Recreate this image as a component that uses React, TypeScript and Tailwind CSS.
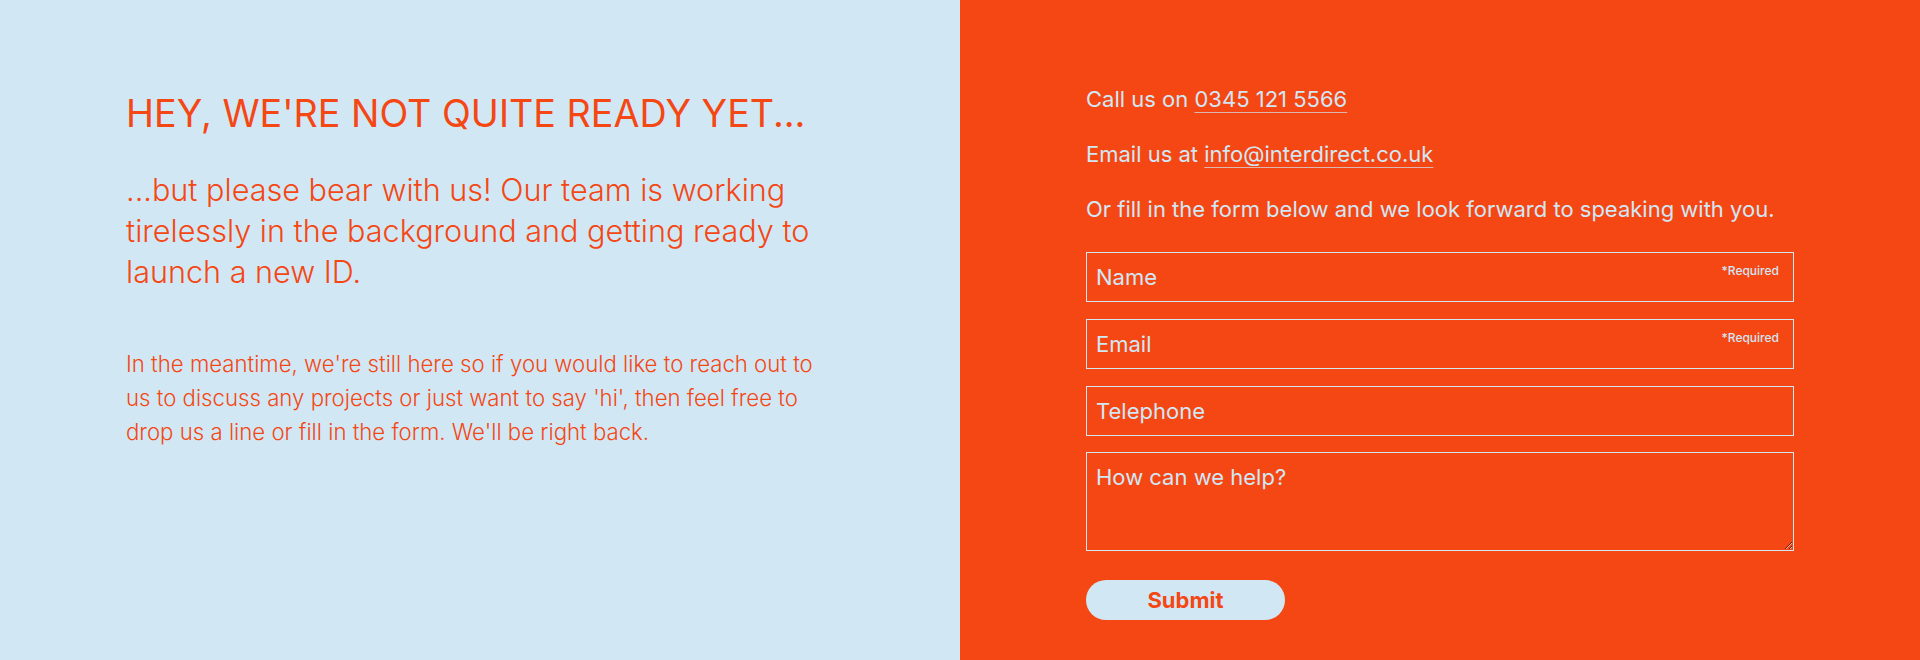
import { useState, ChangeEvent, FormEvent } from "react";

const inputClass =
  "w-full h-[50px] border border-[#d1e7f4] bg-transparent px-[9px] text-[22px] text-[#d1e7f4] placeholder:text-[#d1e7f4] outline-none";

const App = () => {
  const [form, setForm] = useState({
    name: "",
    email: "",
    telephone: "",
    message: "",
  });

  function handleChange(e: ChangeEvent<HTMLInputElement | HTMLTextAreaElement>) {
    const { name, value } = e.target;
    setForm({ ...form, [name]: value });
  }

  const submitForm = (e: FormEvent) => {
    e.preventDefault();
    console.log(form);
  };

  return (
    <div className="grid grid-cols-2 h-[660px] font-['Inter',sans-serif]">
      <div className="bg-[#d1e7f4] pl-[126px] pt-[91px] text-[#f44714]">
        <h1 className="text-[37.7px] leading-[1.2] font-normal">
          HEY, WE'RE NOT QUITE READY YET...
        </h1>
        <p className="mt-[33px] w-[700px] text-[30.6px] leading-[41px] font-light">
          ...but please bear with us! Our team is working tirelessly in the
          background and getting ready to launch a new ID.
        </p>
        <p className="mt-[55px] w-[700px] text-[22.2px] leading-[34px] font-light">
          In the meantime, we're still here so if you would like to reach out
          to us to discuss any projects or just want to say 'hi', then feel free
          to drop us a line or fill in the form. We'll be right back.
        </p>
      </div>

      <div className="bg-[#f44714] pl-[126px] pt-[84px] text-[#d1e7f4]">
        <div className="w-[708px]">
          <p className="text-[22px] leading-[30px]">
            Call us on{" "}
            <a
              href="tel:03451215566"
              className="underline decoration-[#d1e7f4]/70 decoration-1 underline-offset-[5px]"
            >
              0345 121 5566
            </a>
          </p>
          <p className="mt-[25px] text-[22px] leading-[30px]">
            Email us at{" "}
            <a
              href="mailto:info@interdirect.co.uk"
              className="underline decoration-[#d1e7f4]/70 decoration-1 underline-offset-[5px]"
            >
              info@interdirect.co.uk
            </a>
          </p>
          <p className="mt-[25px] text-[22px] leading-[30px]">
            Or fill in the form below and we look forward to speaking with you.
          </p>

          <form onSubmit={submitForm} className="mt-[28px] flex flex-col">
            <div className="relative mb-[17px]">
              <input
                type="text"
                name="name"
                placeholder="Name"
                className={inputClass}
                value={form.name}
                onChange={handleChange}
              />
              <span className="absolute right-[15px] top-[10px] text-[12px] font-medium">
                *Required
              </span>
            </div>
            <div className="relative mb-[17px]">
              <input
                type="email"
                name="email"
                placeholder="Email"
                className={inputClass}
                value={form.email}
                onChange={handleChange}
              />
              <span className="absolute right-[15px] top-[10px] text-[12px] font-medium">
                *Required
              </span>
            </div>
            <div className="mb-[16px]">
              <input
                type="tel"
                name="telephone"
                placeholder="Telephone"
                className={inputClass}
                value={form.telephone}
                onChange={handleChange}
              />
            </div>
            <textarea
              name="message"
              placeholder="How can we help?"
              className="w-full h-[99px] border border-[#d1e7f4] bg-transparent px-[9px] pt-[8px] text-[22px] text-[#d1e7f4] placeholder:text-[#d1e7f4] outline-none"
              value={form.message}
              onChange={handleChange}
            />
            <button
              type="submit"
              className="mt-[29px] h-[40px] w-[199px] rounded-full bg-[#d1e7f4] text-[22px] font-bold text-[#f44714]"
            >
              Submit
            </button>
          </form>
        </div>
      </div>
    </div>
  );
};

export default App;
